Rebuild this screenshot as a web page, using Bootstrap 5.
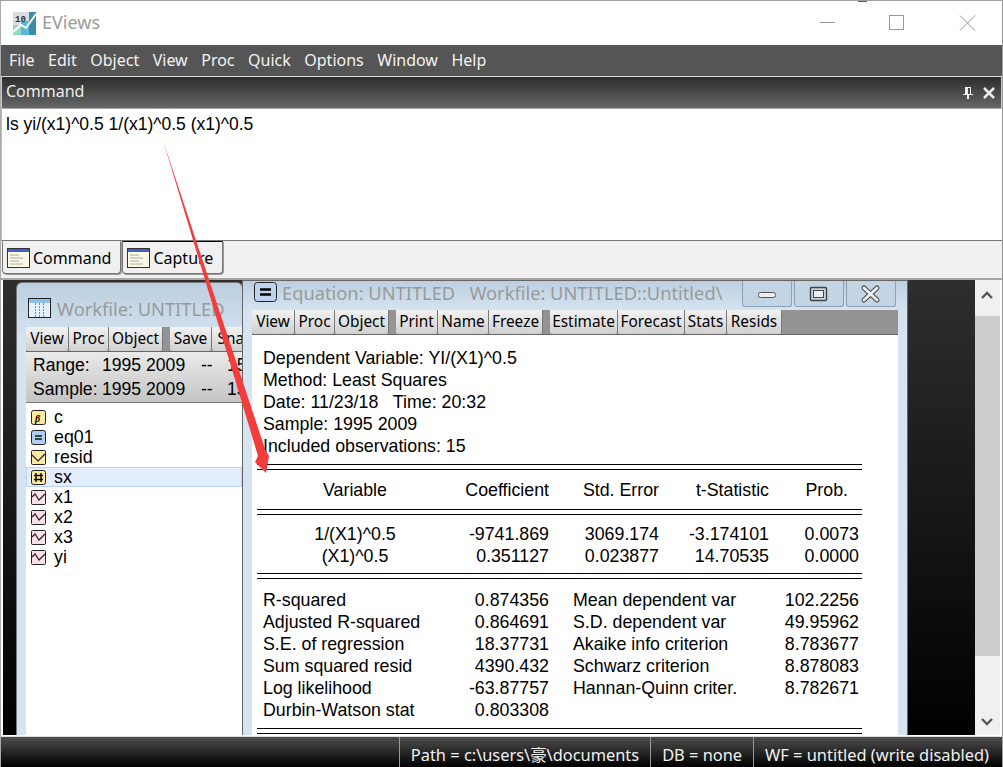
<!DOCTYPE html>
<html lang="en">
<head>
<meta charset="utf-8">
<title>EViews</title>
<link href="https://cdn.jsdelivr.net/npm/bootstrap@5.3.0/dist/css/bootstrap.min.css" rel="stylesheet">
<style>
html,body{height:767px;overflow:hidden;margin:0}
body{font-family:"Noto Sans","Open Sans",sans-serif;background:#fff;color:#000;font-size:16px}
.app{height:767px;position:relative;border-top:1px solid #a0a0a0;border-right:1px solid #999;border-left:1px solid #aaa}
.tbar{height:44px;background:#fff;color:#9b9b9b;font-size:18px;padding-left:11px}
.ttl{margin-left:5px;padding-bottom:2px}
.wctl{width:72px;height:44px}
.menu{height:31px;background:#555;color:#f2f2f2;padding-left:8px;gap:13.5px;font-size:16px;line-height:31px}
.cmdh{height:33px;background:linear-gradient(#2d2d2d,#666);color:#eee;border-top:1px solid #ddd;border-bottom:1px solid #aaa;padding:0 5px 0 4px;line-height:28px;border-left:1px solid #ccc;border-right:1px solid #ccc;font-size:16px}
.cmdb{height:132px;background:#fff;border-bottom:1px solid #777;font-family:"Liberation Sans",sans-serif;font-size:17.5px;padding:3px 4px;line-height:24px;border-left:1px solid #bbb}
.tabs{height:39px;background:#f0f0f0;padding-left:1px;gap:1px;border-bottom:2px solid #a5a5a5;align-items:flex-start}
.tabx{height:33px;background:#f0f0f0;border:1px solid #777;border-top:1px solid #000;border-radius:0 0 4px 4px;gap:3px;padding:0 9px 0 4px;line-height:30px;box-shadow:1px 1px 0 #999}
.tabx.on{border-top-color:#f0f0f0}
.work{height:455px;position:relative;background:linear-gradient(#2e2e2e,#000);margin-left:2px;margin-right:2px}
.sb{position:absolute;right:0;top:0;bottom:0;width:25px;background:#f0f0f0}
.sb i{position:absolute;left:0;right:0;top:36px;height:340px;background:#cdcdcd}
.sb svg{position:absolute;left:5px}
.win{position:absolute;background:linear-gradient(#bccfe0,#d6e4f1 60px);border:1px solid #666;border-bottom:0}
.w1{left:13px;top:2px;width:227px;height:453px;border-radius:6px 6px 0 0;border-color:#777}
.w2{left:239px;top:0;width:666px;height:455px;background:linear-gradient(#bccfe0,#d6e4f1 30px)}
.wt{color:#9a9a9a;font-size:18.3px;white-space:nowrap;overflow:hidden}
.w1 .wt{padding:15px 0 0 11px;height:44px;gap:6px;line-height:22px}
.w2 .wt{padding:1px 0 0 11px;height:29px;gap:5px;line-height:22px}
.wbtn{position:absolute;top:0;height:26px;width:50px;border:1px solid #8aa0b8;border-top:0;border-radius:0 0 3px 3px;background:#c3d4e5}
.bmin{left:499px}.bmax{left:551px}.bcls{left:603px}
.tool{height:25px;background:#949494;border-bottom:1px solid #666;margin:0 9px;white-space:nowrap;overflow:hidden;line-height:24px;font-size:15.4px}
.w1 .tool,.w1 .rng,.w1 .lst{margin-right:0}
.tb{background:linear-gradient(#f2f2f2,#d0d0d0);border-right:1px solid #777;border-radius:0 0 2px 2px;height:24px;flex:none;text-align:center}
.b40{width:40px}.b42{width:42px}.b43{width:43px}.b51{width:51px}.b54{width:54px}.b55{width:55px}.b67{width:67px}.b68{width:68px}.b80{width:80px}
.gapb{width:7px;flex:none;background:#949494}
.rng{margin:0 9px;height:51px;background:linear-gradient(#eaeaea,#c4c4c4);border-bottom:1px solid #777;font-family:"Liberation Sans",sans-serif;font-size:17.6px;padding:1px 0 0 7px;line-height:24px;white-space:nowrap;overflow:hidden}
.rl{width:69px;flex:none}.rd{width:99px;flex:none}.rs{width:26px;flex:none}
.lst{margin:0 9px;background:#fff;height:333px;padding-top:4px;font-family:"Liberation Sans",sans-serif;font-size:17.8px;line-height:20px}
.li{height:20px;padding-left:5px;gap:8px}
.li.sel{background:#e3efff;box-shadow:inset 0 0 0 1px #b9d4f5}
.eqb{margin:0 9px;background:#fff;height:400px;overflow:hidden;font-family:"Liberation Sans",sans-serif;font-size:17.8px;padding:12px 0 0 5px;line-height:22px}
.hdr{padding-left:6px}
.dbl{height:6px;border-top:1px solid #000;border-bottom:1px solid #000;width:605px;margin:0}
.m6{margin-top:6px}.m7{margin-top:7px}.m8{margin-top:8px}.m9{margin-top:9px}.m10{margin-top:10px}
.rw{display:flex;width:605px;height:22px;white-space:nowrap}
.c0{width:196px;text-align:center}
.c1{width:96px;text-align:right}
.c2,.c3{width:110px;text-align:right}
.c4{width:90px;text-align:right}
.c4p{padding-right:11px}
.s0{width:6px}.s1{width:200px}.s2{width:86px;text-align:right}.s3{width:24px}.s4{width:200px}.s5{width:86px;text-align:right}
.stat{height:31px;background:linear-gradient(#4e4e4e,#000);color:#f0f0f0;border-top:1px solid #ddd;position:absolute;left:0;right:0;top:735px;justify-content:flex-end;font-size:16.4px;font-family:"Noto Sans","Noto Sans CJK SC",sans-serif}
.seg{border-left:1px solid #999;padding:0 11px;height:31px;white-space:nowrap;line-height:36px}
.seg:last-child{padding-right:13px}
.arrow{position:absolute;left:0;top:0;pointer-events:none}
</style>
</head>
<body>
<div class="app">
  <div class="tbar d-flex align-items-center">
    <svg width="25" height="25" viewBox="0 0 25 25"><rect x="1" y="1" width="23" height="23" fill="#ddd"/><rect x="1" y="14" width="8" height="10" fill="#8fdcc0"/><rect x="9" y="10" width="8" height="14" fill="#57b9d6"/><rect x="17" y="1" width="7" height="23" fill="#3a8cab"/><path d="M1 21L9 14l5 3L24 3" fill="none" stroke="#fff" stroke-width="2"/><text x="3" y="11" font-size="9" font-weight="700" fill="#234" font-family="Liberation Mono">10</text></svg>
    <span class="ttl flex-grow-1">EViews</span>
    <svg class="wctl" viewBox="0 0 72 44"><path d="M16 21.5H31" stroke="#999"/></svg>
    <svg class="wctl" viewBox="0 0 72 44"><rect x="13.5" y="14.5" width="14" height="14" fill="none" stroke="#999"/></svg>
    <svg class="wctl" style="width:54px" viewBox="0 0 54 44"><path d="M12 14.5L27 29.5M27 14.5L12 29.5" stroke="#999"/></svg>
  </div>
  <div class="menu d-flex"><span>File</span><span>Edit</span><span>Object</span><span>View</span><span>Proc</span><span>Quick</span><span>Options</span><span>Window</span><span>Help</span></div>
  <div class="cmdh d-flex justify-content-between"><span>Command</span>
    <span class="d-flex align-items-center gap-2"><svg width="12" height="14" viewBox="0 0 12 14"><path d="M3 1H9V8H11V9H7V13H5V9H1V8H3ZM6 2V8H8V2Z" fill="#eee"/></svg><svg width="14" height="14" viewBox="0 0 14 14"><path d="M2 2L12 12M12 2L2 12" stroke="#eee" stroke-width="2.5"/></svg></span></div>
  <div class="cmdb">ls yi/(x1)^0.5 1/(x1)^0.5 (x1)^0.5</div>
  <div class="tabs d-flex">
    <div class="tabx on d-flex align-items-center"><svg width="23" height="20" viewBox="0 0 23 20"><rect x=".5" y=".5" width="22" height="19" fill="#fdf8e6" stroke="#333"/><rect x="1" y="1" width="21" height="3" fill="#3f5fc8"/><path d="M3 7H12M3 10H16M3 13H12M3 16H16" stroke="#aaa"/></svg>Command</div>
    <div class="tabx d-flex align-items-center"><svg width="23" height="20" viewBox="0 0 23 20"><rect x=".5" y=".5" width="22" height="19" fill="#fdf8e6" stroke="#333"/><rect x="1" y="1" width="21" height="3" fill="#3f5fc8"/><path d="M3 7H12M3 10H16M3 13H12M3 16H16" stroke="#aaa"/></svg>Capture</div>
  </div>
  <div class="work">
    <div class="win w1">
      <div class="wt d-flex align-items-start"><svg width="23" height="20" viewBox="0 0 23 20"><rect x=".5" y=".5" width="22" height="19" fill="#e5f1ff" stroke="#222"/><rect x="1" y="1" width="21" height="4" fill="#8fc0e8"/><path d="M7.5 5V19M11.5 5V19M15.5 5V19" stroke="#5b8fe0" stroke-dasharray="2 1"/></svg><span>Workfile: UNTITLED</span></div>
      <div class="tool d-flex"><span class="tb b43">View</span><span class="tb b40">Proc</span><span class="tb b54">Object</span><span class="gapb"></span><span class="tb b42">Save</span><span class="tb b80">Snapshot</span></div>
      <div class="rng">
        <div class="d-flex"><span class="rl">Range:</span><span class="rd">1995 2009</span><span class="rs">--</span><span>15</span></div>
        <div class="d-flex"><span class="rl">Sample:</span><span class="rd">1995 2009</span><span class="rs">--</span><span>15</span></div>
      </div>
      <div class="lst">
        <div class="li d-flex align-items-center"><svg width="15" height="15" viewBox="0 0 15 15"><rect x=".5" y=".5" width="14" height="14" rx="2" fill="#fbe9a0" stroke="#222"/><text x="4" y="11.5" font-size="10" font-style="italic" font-weight="700" font-family="Liberation Serif">β</text></svg>c</div>
        <div class="li d-flex align-items-center"><svg width="15" height="15" viewBox="0 0 15 15"><rect x=".5" y=".5" width="14" height="14" rx="2" fill="#aecdf0" stroke="#222"/><path d="M4 6H11M4 9H11" stroke="#111" stroke-width="1.5"/></svg>eq01</div>
        <div class="li d-flex align-items-center"><svg width="15" height="15" viewBox="0 0 15 15"><rect x=".5" y=".5" width="14" height="14" rx="1" fill="#fbe9a0" stroke="#222"/><path d="M1 5L7 11L14 4" fill="none" stroke="#222" stroke-width="1.2"/></svg>resid</div>
        <div class="li sel d-flex align-items-center"><svg width="15" height="15" viewBox="0 0 15 15"><rect x=".5" y=".5" width="14" height="14" rx="2" fill="#fbe9a0" stroke="#222"/><path d="M5 3V12M10 3V12M3 5.5H12M3 9.5H12" stroke="#111" stroke-width="1.5"/></svg>sx</div>
        <div class="li d-flex align-items-center"><svg width="15" height="15" viewBox="0 0 15 15"><rect x=".5" y=".5" width="14" height="14" rx="1" fill="#fbdfe8" stroke="#222"/><path d="M1 7L4 4L8 10L14 4" fill="none" stroke="#222" stroke-width="1.2"/></svg>x1</div>
        <div class="li d-flex align-items-center"><svg width="15" height="15" viewBox="0 0 15 15"><rect x=".5" y=".5" width="14" height="14" rx="1" fill="#fbdfe8" stroke="#222"/><path d="M1 7L4 4L8 10L14 4" fill="none" stroke="#222" stroke-width="1.2"/></svg>x2</div>
        <div class="li d-flex align-items-center"><svg width="15" height="15" viewBox="0 0 15 15"><rect x=".5" y=".5" width="14" height="14" rx="1" fill="#fbdfe8" stroke="#222"/><path d="M1 7L4 4L8 10L14 4" fill="none" stroke="#222" stroke-width="1.2"/></svg>x3</div>
        <div class="li d-flex align-items-center"><svg width="15" height="15" viewBox="0 0 15 15"><rect x=".5" y=".5" width="14" height="14" rx="1" fill="#fbdfe8" stroke="#222"/><path d="M1 7L4 4L8 10L14 4" fill="none" stroke="#222" stroke-width="1.2"/></svg>yi</div>
      </div>
    </div>
    <div class="win w2">
      <div class="wt d-flex align-items-start"><svg width="23" height="20" viewBox="0 0 23 20"><rect x=".5" y=".5" width="22" height="19" rx="3" fill="#bcd4ee" stroke="#222"/><path d="M6 7.5H17M6 12.5H17" stroke="#000" stroke-width="2.4"/></svg><span>Equation: UNTITLED&nbsp;&nbsp; Workfile: UNTITLED::Untitled\</span></div>
      <div class="wbtn bmin"><svg width="48" height="25" viewBox="0 0 48 25"><rect x="15.5" y="10.5" width="17" height="5" rx="2" fill="#eee" stroke="#555"/></svg></div>
      <div class="wbtn bmax"><svg width="48" height="25" viewBox="0 0 48 25"><rect x="15.5" y="5.5" width="16" height="13" rx="1" fill="none" stroke="#444" stroke-width="1.4"/><rect x="18.5" y="8.5" width="10" height="7" fill="#eee" stroke="#444"/></svg></div>
      <div class="wbtn bcls"><svg width="48" height="25" viewBox="0 0 48 25"><path d="M17 6L30 18M30 6L17 18" stroke="#444" stroke-width="5" stroke-linecap="round"/><path d="M17 6L30 18M30 6L17 18" stroke="#eee" stroke-width="3" stroke-linecap="round"/></svg></div>
      <div class="tool d-flex"><span class="tb b43">View</span><span class="tb b40">Proc</span><span class="tb b54">Object</span><span class="gapb"></span><span class="tb b42">Print</span><span class="tb b51">Name</span><span class="tb b54">Freeze</span><span class="gapb"></span><span class="tb b68">Estimate</span><span class="tb b67">Forecast</span><span class="tb b42">Stats</span><span class="tb b55">Resids</span></div>
      <div class="eqb">
        <div class="hdr">
          <div>Dependent Variable: YI/(X1)^0.5</div>
          <div>Method: Least Squares</div>
          <div>Date: 11/23/18&nbsp;&nbsp; Time: 20:32</div>
          <div>Sample: 1995 2009</div>
          <div>Included observations: 15</div>
        </div>
        <div class="dbl m7"></div>
        <div class="rw m9"><span class="c0">Variable</span><span class="c1">Coefficient</span><span class="c2">Std. Error</span><span class="c3">t-Statistic</span><span class="c4 c4p">Prob.</span></div>
        <div class="dbl m8"></div>
        <div class="rw m8"><span class="c0">1/(X1)^0.5</span><span class="c1">-9741.869</span><span class="c2">3069.174</span><span class="c3">-3.174101</span><span class="c4">0.0073</span></div>
        <div class="rw"><span class="c0">(X1)^0.5</span><span class="c1">0.351127</span><span class="c2">0.023877</span><span class="c3">14.70535</span><span class="c4">0.0000</span></div>
        <div class="dbl m6"></div>
        <div class="rw m10"><span class="s0"></span><span class="s1">R-squared</span><span class="s2">0.874356</span><span class="s3"></span><span class="s4">Mean dependent var</span><span class="s5">102.2256</span></div>
        <div class="rw"><span class="s0"></span><span class="s1">Adjusted R-squared</span><span class="s2">0.864691</span><span class="s3"></span><span class="s4">S.D. dependent var</span><span class="s5">49.95962</span></div>
        <div class="rw"><span class="s0"></span><span class="s1">S.E. of regression</span><span class="s2">18.37731</span><span class="s3"></span><span class="s4">Akaike info criterion</span><span class="s5">8.783677</span></div>
        <div class="rw"><span class="s0"></span><span class="s1">Sum squared resid</span><span class="s2">4390.432</span><span class="s3"></span><span class="s4">Schwarz criterion</span><span class="s5">8.878083</span></div>
        <div class="rw"><span class="s0"></span><span class="s1">Log likelihood</span><span class="s2">-63.87757</span><span class="s3"></span><span class="s4">Hannan-Quinn criter.</span><span class="s5">8.782671</span></div>
        <div class="rw"><span class="s0"></span><span class="s1">Durbin-Watson stat</span><span class="s2">0.803308</span></div>
        <div class="dbl m7"></div>
      </div>
    </div>
    <div class="sb"><i></i>
      <svg style="top:10px" width="14" height="10" viewBox="0 0 14 10"><path d="M2 8L7 3L12 8" fill="none" stroke="#555" stroke-width="2.4"/></svg>
      <svg style="top:437px" width="14" height="10" viewBox="0 0 14 10"><path d="M2 2L7 7L12 2" fill="none" stroke="#555" stroke-width="2.4"/></svg>
    </div>
  </div>
  <div class="stat d-flex">
    <span class="seg">Path = c:\users\豪\documents</span><span class="seg">DB = none</span><span class="seg">WF = untitled (write disabled)</span>
  </div>
  <svg class="arrow" width="1003" height="767" viewBox="1 1 1003 767"><path d="M163.5 142L265 449L269 456L266 473L255 462L258 456Z" fill="#f33c3c"/><rect x="858" y="1" width="9" height="1" fill="#b33"/></svg>
</div>
</body>
</html>
